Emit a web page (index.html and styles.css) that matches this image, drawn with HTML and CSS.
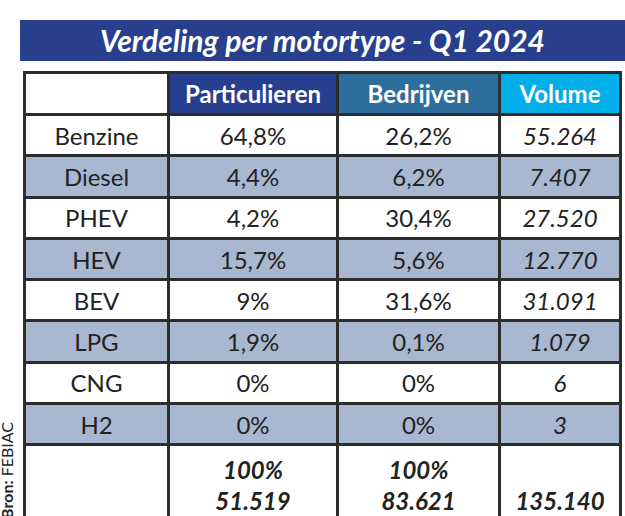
FILE: index.html
```html
<!DOCTYPE html>
<html lang="nl">
<head>
<meta charset="utf-8">
<title>Verdeling per motortype - Q1 2024</title>
<link rel="stylesheet" href="styles.css">
</head>
<body>
<div class="page">
  <h1 class="title">Verdeling per motortype - Q1 2024</h1>
  <div class="content">
    <div class="source"><b>Bron:</b> FEBIAC</div>
    <table class="grid">
      <colgroup>
        <col class="c1"><col class="c2"><col class="c3"><col class="c4">
      </colgroup>
      <thead>
        <tr class="head">
          <th class="blank"></th>
          <th class="h-part">Particulieren</th>
          <th class="h-bedr">Bedrijven</th>
          <th class="h-vol">Volume</th>
        </tr>
      </thead>
      <tbody>
        <tr><td>Benzine</td><td>64,8%</td><td>26,2%</td><td class="vol">55.264</td></tr>
        <tr class="alt"><td>Diesel</td><td>4,4%</td><td>6,2%</td><td class="vol">7.407</td></tr>
        <tr><td>PHEV</td><td>4,2%</td><td>30,4%</td><td class="vol">27.520</td></tr>
        <tr class="alt"><td>HEV</td><td>15,7%</td><td>5,6%</td><td class="vol">12.770</td></tr>
        <tr><td>BEV</td><td>9%</td><td>31,6%</td><td class="vol">31.091</td></tr>
        <tr class="alt"><td>LPG</td><td>1,9%</td><td>0,1%</td><td class="vol">1.079</td></tr>
        <tr><td>CNG</td><td>0%</td><td>0%</td><td class="vol">6</td></tr>
        <tr class="alt"><td>H2</td><td>0%</td><td>0%</td><td class="vol">3</td></tr>
        <tr class="total"><td></td><td>100%<br>51.519</td><td>100%<br>83.621</td><td>135.140</td></tr>
      </tbody>
    </table>
  </div>
</div>
</body>
</html>
```
FILE: styles.css
```css
html, body {
  margin: 0;
  padding: 0;
  background: #ffffff;
}
body {
  font-family: Lato, "Open Sans", "Liberation Sans", sans-serif;
  color: #222222;
}
.page {
  padding-top: 20px;
}
.title {
  margin: 0 0 10px 20px;
  height: 41px;
  background: #283f8e;
  color: #ffffff;
  font-size: 30px;
  font-weight: 700;
  font-style: italic;
  line-height: 41px;
  text-align: center;
}
.content {
  display: flex;
  align-items: flex-end;
}
.source {
  writing-mode: vertical-rl;
  transform: rotate(180deg);
  font-size: 16px;
  line-height: 13px;
  width: 13px;
  margin-right: 10px;
  margin-bottom: 7px;
  color: #222;
  white-space: nowrap;
}
.grid {
  border-collapse: collapse;
  table-layout: fixed;
  width: 599px;
  font-size: 24px;
}
.c1 { width: 144px; }
.c2 { width: 169px; }
.c3 { width: 162px; }
.c4 { width: 121px; }
.grid th, .grid td {
  border: 3px solid #2d2d2d;
  text-align: center;
  padding: 0;
}
.head {
  height: 42px;
}
.head th {
  color: #ffffff;
  font-weight: 700;
}
.head .blank { background: #ffffff; }
.h-part { background: #273f8f; }
.h-bedr { background: #2e6e9c; }
.h-vol { background: #00aee9; }
.grid tbody tr {
  height: 41.3px;
}
.grid tbody tr.alt {
  background: #a8b8d0;
}
.vol {
  font-style: italic;
}
.grid tbody tr.total {
  height: 80px;
}
.total td {
  font-weight: 700;
  font-style: italic;
  vertical-align: top;
  line-height: 31px;
  padding-top: 8px;
}
.total td:last-child {
  padding-top: 39px;
}
```
